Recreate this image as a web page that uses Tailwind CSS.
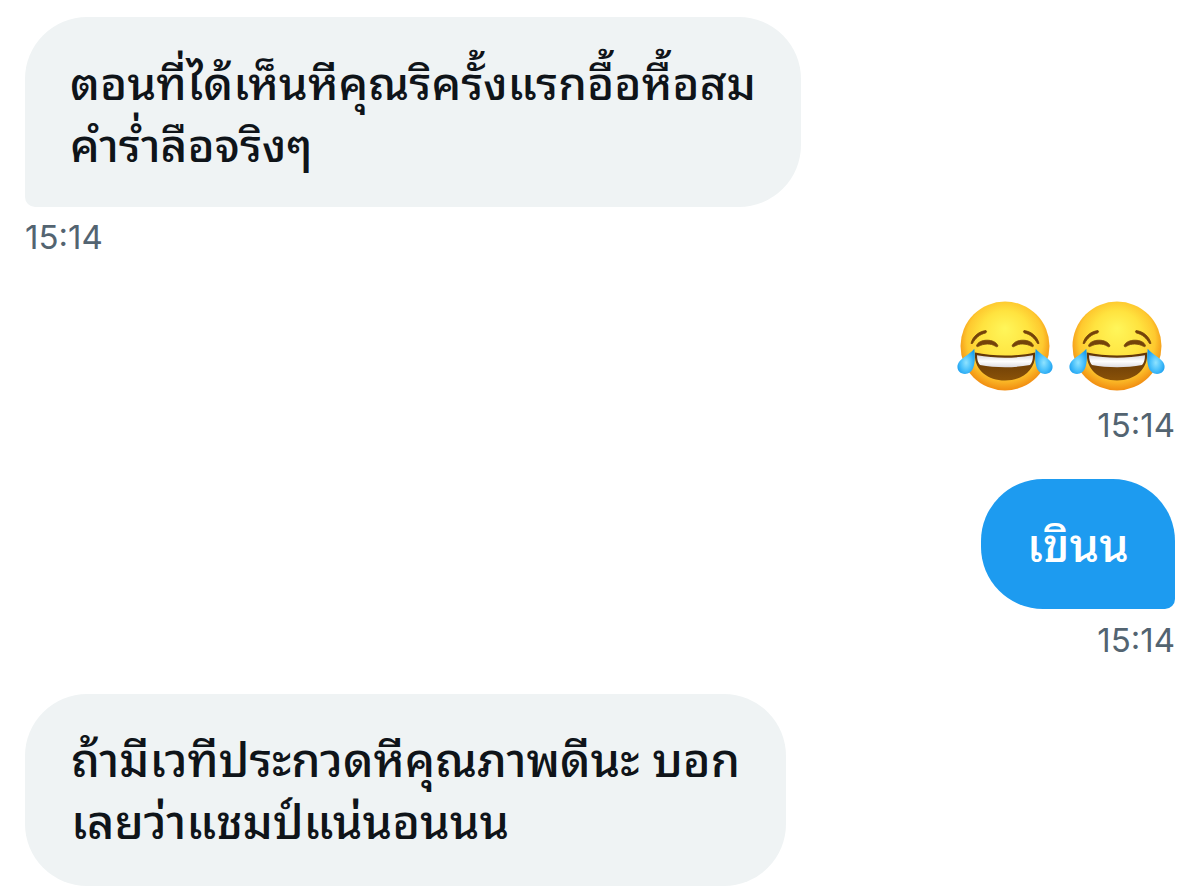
<!DOCTYPE html>
<html lang="th">
<head>
<meta charset="utf-8">
<meta name="viewport" content="width=device-width, initial-scale=1">
<title>Messages</title>
<script src="https://cdn.jsdelivr.net/npm/@tailwindcss/browser@4"></script>
</head>
<body class="bg-white font-['Inter','Noto_Sans_Thai_Looped','Loma','Garuda','Waree','Noto_Sans_Thai',sans-serif] text-[#0f1419]">
<svg class="absolute size-0" aria-hidden="true">
  <defs>
    <radialGradient id="face" cx="50%" cy="46%" r="55%" fy="30%">
      <stop offset="0" stop-color="#fff65a"/>
      <stop offset="0.5" stop-color="#ffe33f"/>
      <stop offset="0.78" stop-color="#fec92f"/>
      <stop offset="1" stop-color="#f0880f"/>
    </radialGradient>
    <linearGradient id="mouth" x1="0" y1="0" x2="0" y2="1">
      <stop offset="0" stop-color="#5f3407"/>
      <stop offset="1" stop-color="#8a5208"/>
    </linearGradient>
    <linearGradient id="teeth" x1="0" y1="0" x2="0" y2="1">
      <stop offset="0" stop-color="#d9d8dc"/>
      <stop offset="0.5" stop-color="#ffffff"/>
      <stop offset="1" stop-color="#dddce2"/>
    </linearGradient>
    <radialGradient id="tear" cx="50%" cy="55%" r="60%">
      <stop offset="0" stop-color="#8fe3ff"/>
      <stop offset="0.5" stop-color="#4cc2fb"/>
      <stop offset="1" stop-color="#159aee"/>
    </radialGradient>
    <symbol id="joy" viewBox="0 0 96 90">
      <circle cx="48" cy="45" r="44.5" fill="url(#face)"/>
      <g fill="#74430a" stroke="#74430a" stroke-width="0.800" stroke-linejoin="round">
        <path d="M14 42.500C15.500 36 21 30.500 29 29.500C30 30.500 29.500 31.500 28.500 32C22.500 33.500 18.500 37 15.500 42.500Z"/>
        <path d="M82 42.500C80.500 36 75 30.500 67 29.500C66 30.500 66.500 31.500 67.500 32C73.500 33.500 77.500 37 80.500 42.500Z"/>
        <path d="M19.500 45C21 37.500 38.500 37 41 45C40.500 46 39.500 46 38.500 45.300C33.500 42 27 42.500 21.500 45.300C20.500 45.800 19.800 45.700 19.500 45Z"/>
        <path d="M76.500 45C75 37.500 57.500 37 55 45C55.500 46 56.500 46 57.500 45.300C62.500 42 69 42.500 74.500 45.300C75.500 45.800 76.200 45.700 76.500 45Z"/>
      </g>
      <path d="M18 51.500C36 55.500 60 55.500 78 51.500C79.500 68 66 79.500 48 79.500S16.500 68 18 51.500Z" fill="url(#mouth)"/>
      <path d="M20 54.300C38 57.500 58 57.500 76 54.300C76 58.500 75 62 73 64C57 67 39 67 23 64C21 62 20 58.500 20 54.300Z" fill="url(#teeth)"/>
      <path d="M17.300 47.700C18.500 58 18.500 73 8 73C1 73-1.500 66 2 61C5 56.500 12 54 17.300 47.700Z" fill="url(#tear)"/>
      <path d="M78.700 47.700C77.500 58 77.500 73 88 73C95 73 97.500 66 94 61C91 56.500 84 54 78.700 47.700Z" fill="url(#tear)"/>
    </symbol>
  </defs>
</svg>
<main class="flex flex-col px-[25px] pt-[17px] pb-2">
  <article class="flex flex-col items-start">
    <p class="rounded-[62px] rounded-bl-[10px] bg-[#eff3f4] px-[45px] pt-[35px] pb-[31px] text-[46px] leading-[62px] font-medium">ตอนที่ได้เห็นหีคุณริครั้งแรกอื้อหื้อสม<br>คำร่ำลือจริงๆ</p>
    <time datetime="15:14" class="mt-2 text-[33px] leading-[44px] text-[#536471]">15:14</time>
  </article>
  <article class="mt-[41px] flex flex-col items-end">
    <div class="flex gap-4 px-[10px]">
      <svg class="h-[92px] w-[96px]" role="img" aria-label="😂"><use href="#joy"/></svg>
      <svg class="h-[92px] w-[96px]" role="img" aria-label="😂"><use href="#joy"/></svg>
    </div>
    <time datetime="15:14" class="mt-[11px] text-[33px] leading-[44px] text-[#536471]">15:14</time>
  </article>
  <article class="mt-8 flex flex-col items-end">
    <p class="rounded-[62px] rounded-br-[10px] bg-[#1d9bf0] px-[46px] pt-[35px] pb-[33px] text-[47px] leading-[62px] font-medium text-white">เขินน</p>
    <time datetime="15:14" class="mt-[9px] text-[33px] leading-[44px] text-[#536471]">15:14</time>
  </article>
  <article class="mt-8 flex flex-col items-start">
    <p class="rounded-[62px] bg-[#eff3f4] px-[46px] pt-[35px] pb-[33px] text-[47px] leading-[62px] font-medium">ถ้ามีเวทีประกวดหีคุณภาพดีนะ บอก<br>เลยว่าแชมป์แน่นอนนน</p>
  </article>
</main>
</body>
</html>
